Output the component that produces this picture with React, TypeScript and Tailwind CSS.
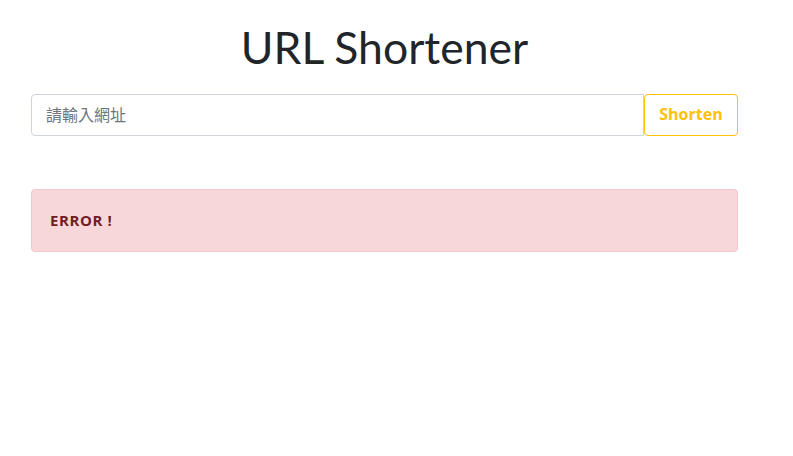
export default function App() {
  return (
    <div className="min-h-[456px] bg-white font-['Lato','Noto_Sans_CJK_TC',sans-serif]">
      <div className="ml-[31px] w-[707px] pt-[18px]">
        <h1 className="text-center text-[44.5px] leading-[58px] font-normal text-[#212529]">
          URL Shortener
        </h1>
        <div className="mt-[18px] flex h-[42px]">
          <input
            type="text"
            placeholder="請輸入網址"
            className="h-full flex-1 rounded-l-[4px] border border-[#ced4da] pl-[14px] pr-[15px] pb-[3px] text-[16px] text-[#495057] outline-none placeholder:text-[#6c757d] font-['Noto_Sans_CJK_TC','Lato',sans-serif]"
          />
          <button className="h-full w-[94px] rounded-[4px] border border-[#ffc107] pb-[3px] text-[16px] font-bold text-[#ffc107] font-['Open_Sans',sans-serif]">
            Shorten
          </button>
        </div>
        <div className="mt-[53px] flex h-[63px] items-center rounded-[4px] border border-[#f5c6cb] bg-[#f8d7da] px-[18px]">
          <span className="text-[15px] font-bold tracking-[0.6px] text-[#721c24] font-['Open_Sans',sans-serif]">
            ERROR !
          </span>
        </div>
      </div>
    </div>
  );
}
